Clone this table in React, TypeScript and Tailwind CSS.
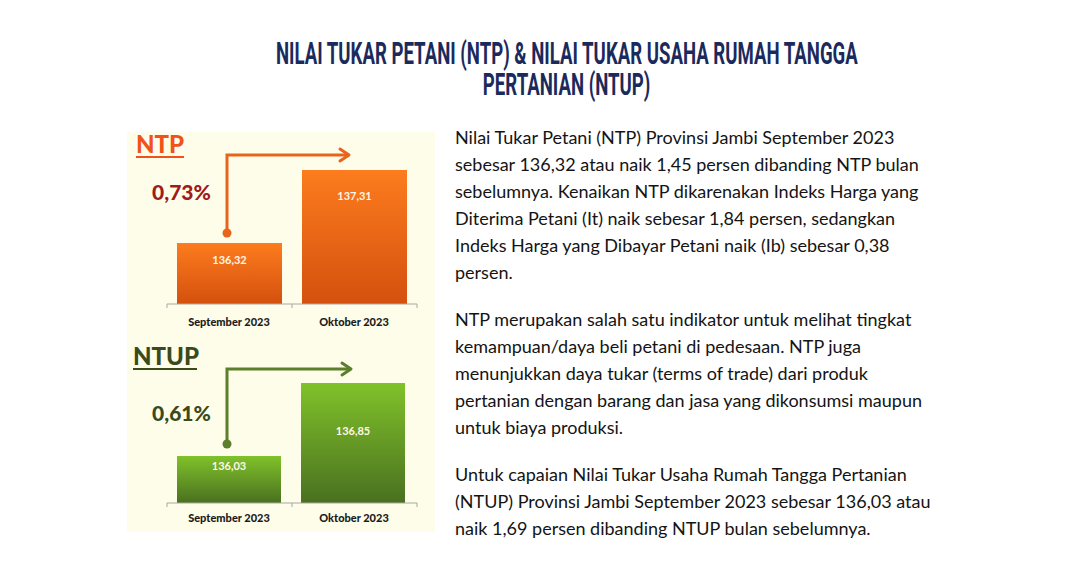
import React from 'react';

type ChartProps = {
  label: string;
  labelColor: string;
  pct: string;
  pctColor: string;
  lineColor: string;
  gradId: string;
  top: string;
  bottom: string;
  bar1: { x: number; w: number; y: number; v: string; ly: number };
  bar2: { x: number; w: number; y: number; v: string; ly: number };
  axisY: number;
  labelY: number;
  pctY: number;
  titleX: number;
  titleY: number;
  titleW: number;
  arrow: { top: number; dot: number; end: number };
};

const Chart: React.FC<ChartProps> = (p) => (
  <svg width="308" height="200" viewBox="0 0 308 200" className="block overflow-visible">
    <defs>
      <linearGradient id={p.gradId} x1="0" y1="0" x2="0" y2="1">
        <stop offset="0%" stopColor={p.top} />
        <stop offset="100%" stopColor={p.bottom} />
      </linearGradient>
    </defs>

    {/* title */}
    <text x={p.titleX} y={p.titleY} fontFamily="Lato, sans-serif" fontWeight="900" fontSize="24" fill={p.labelColor}>
      {p.label}
    </text>
    <rect x={p.titleX} y={p.titleY + 3} width={p.titleW} height="2" fill={p.labelColor} />

    {/* percent */}
    <text x="25" y={p.pctY} fontFamily="Lato, sans-serif" fontWeight="900" fontSize="21" fill={p.pctColor}>
      {p.pct}
    </text>

    {/* arrow */}
    <path d={`M100 ${p.arrow.dot} V${p.arrow.top} H${p.arrow.end}`} fill="none" stroke={p.lineColor} strokeWidth="3" />
    <path d={`M${p.arrow.end - 9} ${p.arrow.top - 6} L${p.arrow.end} ${p.arrow.top} L${p.arrow.end - 9} ${p.arrow.top + 6}`} fill="none" stroke={p.lineColor} strokeWidth="3" strokeLinecap="round" strokeLinejoin="round" />
    <circle cx="100" cy={p.arrow.dot} r="4.5" fill={p.lineColor} />

    {/* bars */}
    <rect x={p.bar1.x} y={p.bar1.y} width={p.bar1.w} height={p.axisY - p.bar1.y} fill={`url(#${p.gradId})`} />
    <rect x={p.bar2.x} y={p.bar2.y} width={p.bar2.w} height={p.axisY - p.bar2.y} fill={`url(#${p.gradId})`} />
    <text x={p.bar1.x + p.bar1.w / 2} y={p.bar1.ly} textAnchor="middle" fontFamily="Lato, sans-serif" fontWeight="700" fontSize="11" fill="#fff6e6">
      {p.bar1.v}
    </text>
    <text x={p.bar2.x + p.bar2.w / 2} y={p.bar2.ly} textAnchor="middle" fontFamily="Lato, sans-serif" fontWeight="700" fontSize="11" fill="#fff6e6">
      {p.bar2.v}
    </text>

    {/* axis */}
    <path d={`M40 ${p.axisY + 4} V${p.axisY} H290 V${p.axisY + 4} M165 ${p.axisY} V${p.axisY + 4}`} fill="none" stroke="#a8a8a0" strokeWidth="1" />

    <text x="102" y={p.labelY} textAnchor="middle" fontFamily="Lato, sans-serif" fontWeight="900" fontSize="11" fill="#1c1c1c">
      September 2023
    </text>
    <text x="227" y={p.labelY} textAnchor="middle" fontFamily="Lato, sans-serif" fontWeight="900" fontSize="11" fill="#1c1c1c">
      Oktober 2023
    </text>
  </svg>
);

const para1 = [
  'Nilai Tukar Petani (NTP) Provinsi Jambi September 2023',
  'sebesar 136,32 atau naik 1,45 persen dibanding NTP bulan',
  'sebelumnya. Kenaikan NTP dikarenakan Indeks Harga yang',
  'Diterima Petani (It) naik sebesar 1,84 persen, sedangkan',
  'Indeks Harga yang Dibayar Petani naik (Ib) sebesar 0,38',
  'persen.',
];

const para2 = [
  'NTP merupakan salah satu indikator untuk melihat tingkat',
  'kemampuan/daya beli petani di pedesaan. NTP juga',
  'menunjukkan daya tukar (terms of trade) dari produk',
  'pertanian dengan barang dan jasa yang dikonsumsi maupun',
  'untuk biaya produksi.',
];

const para3 = [
  'Untuk capaian Nilai Tukar Usaha Rumah Tangga Pertanian',
  '(NTUP) Provinsi Jambi September 2023 sebesar 136,03 atau',
  'naik 1,69 persen dibanding NTUP bulan sebelumnya.',
];

const Para = ({ lines }: { lines: string[] }) => (
  <p>
    {lines.map((l) => (
      <span key={l} className="block whitespace-nowrap">
        {l}
      </span>
    ))}
  </p>
);

export default function App() {
  return (
    <div className="w-[1080px] h-[575px] bg-white overflow-hidden">
      {/* heading */}
      <div className="pt-[38px] pl-[54px] text-center font-['Roboto',sans-serif] font-bold text-[31px] leading-[31px] text-[#1b2a5c]">
        <div>
          <span className="inline-block scale-x-[0.6] whitespace-nowrap">NILAI TUKAR PETANI (NTP) &amp; NILAI TUKAR USAHA RUMAH TANGGA</span>
        </div>
        <div>
          <span className="inline-block scale-x-[0.6] whitespace-nowrap">PERTANIAN (NTUP)</span>
        </div>
      </div>

      <div className="flex items-start mt-[24px]">
        <div className="ml-[127px] mt-2 w-[308px] h-[400px] bg-[#fefde9] flex flex-col">
          <Chart
            label="NTP"
            labelColor="#f0521a"
            titleX={9}
            titleY={21}
            titleW={48}
            pct="0,73%"
            pctColor="#9d1c1c"
            pctY={68}
            lineColor="#e8641c"
            gradId="gOrange"
            top="#fc7c1e"
            bottom="#d4500e"
            bar1={{ x: 50, w: 105, y: 111, v: '136,32', ly: 132 }}
            bar2={{ x: 175, w: 105, y: 38, v: '137,31', ly: 68 }}
            axisY={172}
            labelY={194}
            arrow={{ top: 23, dot: 101, end: 222 }}
          />
          <Chart
            label="NTUP"
            labelColor="#3b4a1a"
            titleX={6}
            titleY={33}
            titleW={64}
            pct="0,61%"
            pctColor="#3a4a20"
            pctY={89}
            lineColor="#5b7f2a"
            gradId="gGreen"
            top="#80c22a"
            bottom="#4a7020"
            bar1={{ x: 50, w: 104, y: 124, v: '136,03', ly: 138 }}
            bar2={{ x: 174, w: 104, y: 51, v: '136,85', ly: 103 }}
            axisY={171}
            labelY={190}
            arrow={{ top: 37, dot: 112, end: 224 }}
          />
        </div>

        <div className="ml-5 flex flex-col gap-5 font-['Lato',sans-serif] text-[18px] leading-[27px] text-[#141414]">
          <Para lines={para1} />
          <Para lines={para2} />
          <Para lines={para3} />
        </div>
      </div>
    </div>
  );
}
